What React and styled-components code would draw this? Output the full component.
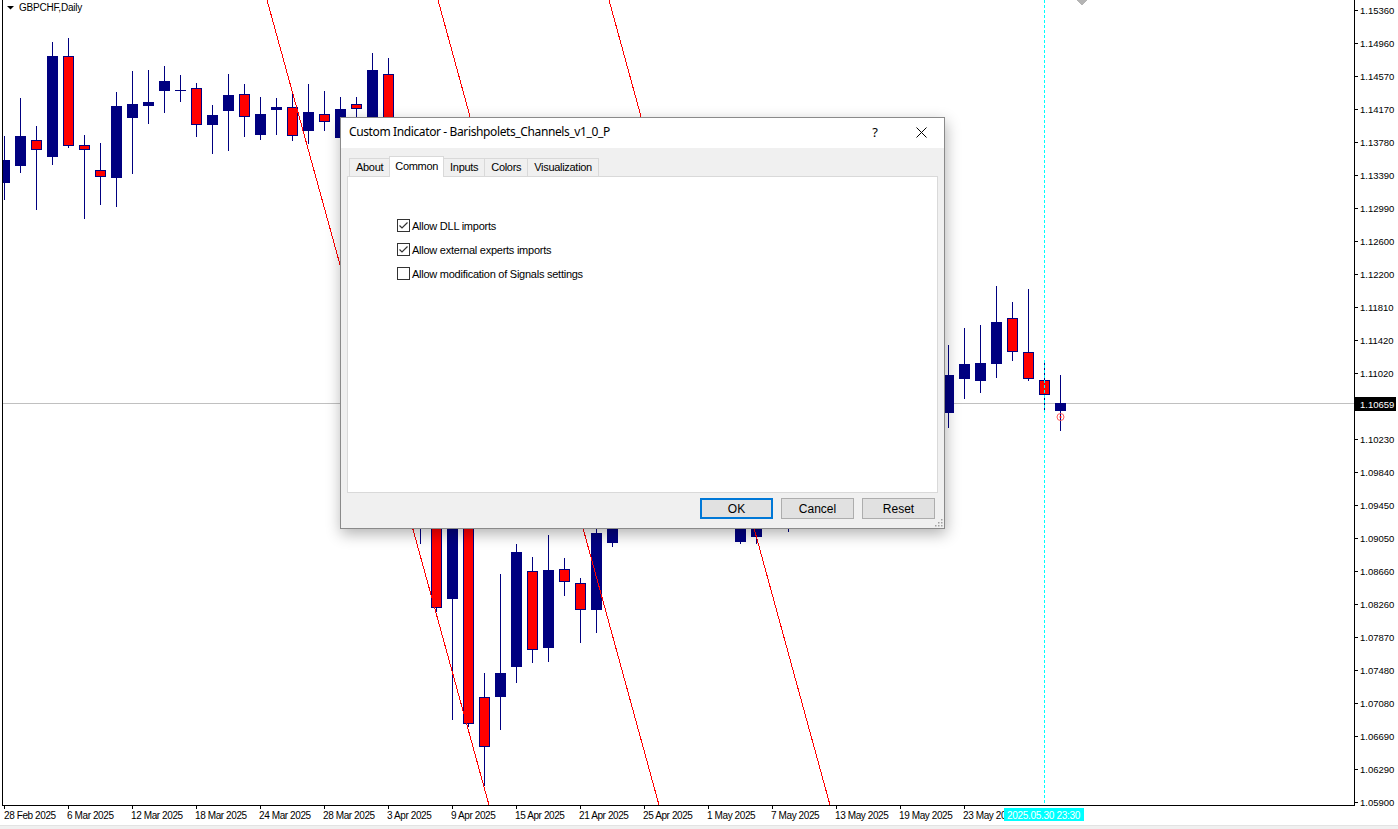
import React from 'react'
import styled, { createGlobalStyle } from 'styled-components'

const NAVY = '#000080'
const RED = '#ff0000'

const GlobalStyle = createGlobalStyle`
  body {
    margin: 0;
    background: #ffffff;
    overflow: hidden;
  }
`

const Terminal = styled.div`
  position: relative;
  width: 1398px;
  height: 829px;
  display: flex;
  flex-direction: column;
  background: #ffffff;
  font-family: "Liberation Sans", Arial, sans-serif;
`

const ChartSvg = styled.svg`
  display: block;
  flex: none;
  font-family: "Liberation Sans", Arial, sans-serif;
`

const StatusStrip = styled.div`
  flex: 1;
  background: #f0f0f0;
  border-top: 1px solid #e3e3e3;
`

const Dialog = styled.div`
  position: absolute;
  left: 340px;
  top: 117px;
  width: 605px;
  height: 412px;
  box-sizing: border-box;
  display: flex;
  flex-direction: column;
  background: #f0f0f0;
  border: 1px solid #8a8a8a;
  box-shadow: 1px 5px 14px rgba(0, 0, 0, 0.3);
  font-family: "Liberation Sans", Arial, sans-serif;
  font-size: 11px;
  letter-spacing: -0.25px;
  color: #000000;
`

const TitleBar = styled.div`
  flex: none;
  height: 30px;
  display: flex;
  align-items: center;
  background: #ffffff;
`

const Caption = styled.div`
  flex: 1;
  padding: 0 0 3px 8px;
  font-family: "Segoe UI", "Noto Sans", sans-serif;
  font-size: 12px;
  letter-spacing: -0.38px;
  white-space: nowrap;
`

const CaptionButton = styled.div`
  width: 46px;
  height: 30px;
  display: flex;
  align-items: center;
  justify-content: center;
  padding-bottom: 2px;
  box-sizing: border-box;
  font-family: "Noto Sans", sans-serif;
  font-size: 13px;
  letter-spacing: 0;
`

const DialogBody = styled.div`
  flex: 1;
  display: flex;
  flex-direction: column;
  padding: 8px 6px 0 6px;
`

const TabStrip = styled.div`
  position: relative;
  z-index: 1;
  height: 21px;
  margin-bottom: -1px;
  display: flex;
  align-items: flex-end;
  padding-left: 2px;
`

const Tab = styled.div`
  box-sizing: border-box;
  height: ${({ $active }) => ($active ? '21px' : '18px')};
  margin-bottom: ${({ $active }) => ($active ? '0' : '1px')};
  margin-left: -1px;
  padding: ${({ $active }) => ($active ? '0 5px 3px' : '0 6px 2px')};
  display: flex;
  align-items: center;
  background: ${({ $active }) => ($active ? '#ffffff' : '#f0f0f0')};
  border: 1px solid #d9d9d9;
  border-bottom: none;
  letter-spacing: -0.3px;
  white-space: nowrap;
  &:first-child {
    margin-left: 0;
  }
`

const TabPanel = styled.div`
  flex: none;
  height: 317px;
  box-sizing: border-box;
  display: flex;
  flex-direction: column;
  gap: 11px;
  padding: 42px 0 0 49px;
  background: #ffffff;
  border: 1px solid #d9d9d9;
`

const CheckRow = styled.label`
  height: 13px;
  display: flex;
  align-items: center;
  gap: 2px;
  white-space: nowrap;
`

const CheckBox = styled.span`
  width: 13px;
  height: 13px;
  box-sizing: border-box;
  display: flex;
  align-items: center;
  justify-content: center;
  background: #ffffff;
  border: 1px solid #333333;
`

const ButtonRow = styled.div`
  display: flex;
  justify-content: flex-end;
  gap: 8px;
  margin: 5px 3px 0 0;
`

const DialogButton = styled.div`
  width: 73px;
  height: 21px;
  box-sizing: border-box;
  display: flex;
  align-items: center;
  justify-content: center;
  background: #e1e1e1;
  border: ${({ $default }) => ($default ? '2px solid #0078d7' : '1px solid #adadad')};
  letter-spacing: 0;
  font-size: 12px;
`

const SizeGrip = styled.svg`
  position: absolute;
  right: 1px;
  bottom: 1px;
`

// chart geometry: one bar every 16px, price scale 33px per label step
const barX = (i) => 4 + 16 * i
const PLOT_RIGHT = 1354
const PLOT_BOTTOM = 805
const CURSOR_LABEL_X = 1004

// [index, high, open, close, low] in chart pixels (smaller = higher price)
const bars = [
  [0, 136, 183, 160, 200], [1, 98, 166, 136, 173], [2, 126, 140, 150, 210],
  [3, 42, 157, 56, 165], [4, 38, 56, 146, 148], [5, 135, 145, 150, 219],
  [6, 143, 170, 177, 205], [7, 92, 178, 106, 207], [8, 71, 118, 104, 174],
  [9, 70, 106, 102, 124], [10, 66, 91, 81, 113], [11, 75, 90, 90, 102],
  [12, 83, 88, 125, 137], [13, 105, 125, 115, 154], [14, 74, 111, 95, 151],
  [15, 84, 94, 117, 137], [16, 97, 135, 114, 140], [17, 98, 110, 107, 135],
  [18, 93, 107, 136, 141], [19, 84, 131, 112, 144], [20, 91, 114, 122, 131],
  [21, 97, 138, 109, 150], [22, 97, 104, 109, 160], [23, 53, 150, 70, 170],
  [24, 58, 74, 180, 200], [25, 190, 200, 260, 280], [26, 300, 330, 500, 544],
  [27, 480, 500, 608, 612], [28, 470, 599, 520, 720], [29, 505, 520, 724, 727],
  [30, 673, 697, 747, 786], [31, 574, 697, 673, 730], [32, 544, 667, 552, 683],
  [33, 557, 571, 650, 663], [34, 535, 648, 570, 662], [35, 558, 569, 582, 596],
  [36, 578, 583, 610, 643], [37, 515, 610, 533, 633], [38, 480, 543, 500, 547],
  [39, 470, 480, 505, 515], [40, 450, 500, 470, 515], [41, 440, 460, 490, 510],
  [42, 430, 495, 455, 512], [43, 420, 440, 470, 500], [44, 430, 480, 445, 505],
  [45, 440, 455, 500, 515], [46, 470, 542, 500, 544], [47, 480, 537, 495, 544],
  [48, 460, 500, 470, 520], [49, 440, 480, 460, 532], [50, 430, 450, 480, 500],
  [51, 400, 470, 430, 490], [52, 390, 410, 450, 470], [53, 380, 440, 400, 460],
  [54, 360, 410, 380, 430], [55, 350, 370, 400, 420], [56, 340, 400, 360, 415],
  [57, 350, 365, 395, 420], [58, 360, 410, 380, 425], [59, 345, 413, 375, 428],
  [60, 328, 379, 364, 399], [61, 325, 381, 363, 393], [62, 286, 364, 322, 378],
  [63, 302, 318, 352, 361], [64, 289, 352, 379, 381], [65, 360, 380, 395, 413],
  [66, 375, 411, 403, 431],
]

const channels = [
  [267, 0, 489, 805],
  [438, 0, 659, 805],
  [609, 0, 830, 805],
]

const priceLabels = [
  '1.15360', '1.14960', '1.14570', '1.14170', '1.13780', '1.13390', '1.12990',
  '1.12600', '1.12200', '1.11810', '1.11420', '1.11020', null, '1.10230',
  '1.09840', '1.09450', '1.09050', '1.08660', '1.08260', '1.07870', '1.07480',
  '1.07080', '1.06690', '1.06290', '1.05900',
]

const timeLabels = [
  '28 Feb 2025', '6 Mar 2025', '12 Mar 2025', '18 Mar 2025', '24 Mar 2025',
  '28 Mar 2025', '3 Apr 2025', '9 Apr 2025', '15 Apr 2025', '21 Apr 2025',
  '25 Apr 2025', '1 May 2025', '7 May 2025', '13 May 2025', '19 May 2025',
  '23 May 2025',
]

const Candle = ({ bar }) => {
  const [i, high, open, close, low] = bar
  const x = barX(i)
  const top = Math.min(open, close)
  const bottom = Math.max(open, close)
  const bull = close <= open
  return (
    <g>
      <line x1={x + 0.5} x2={x + 0.5} y1={high} y2={low} stroke={NAVY} />
      {bottom - top < 2 ? (
        <line x1={x - 5} x2={x + 6} y1={top + 0.5} y2={top + 0.5} stroke={NAVY} />
      ) : (
        <rect
          x={x - 4.5}
          y={top + 0.5}
          width={10}
          height={bottom - top - 1}
          fill={bull ? NAVY : RED}
          stroke={NAVY}
        />
      )}
    </g>
  )
}

const Chart = () => (
  <ChartSvg width="1398" height="825" viewBox="0 0 1398 825">
    <defs>
      <clipPath id="plot">
        <rect x="3" y="0" width={PLOT_RIGHT - 3} height={PLOT_BOTTOM} />
      </clipPath>
      <clipPath id="timescale">
        <rect x="0" y={PLOT_BOTTOM} width={CURSOR_LABEL_X} height="20" />
      </clipPath>
    </defs>

    <g clipPath="url(#plot)" shapeRendering="crispEdges">
      <line x1="3" x2={PLOT_RIGHT} y1="403.5" y2="403.5" stroke="#c0c0c0" />
      {bars.map((b) => (
        <Candle key={b[0]} bar={b} />
      ))}
      {channels.map(([x1, y1, x2, y2]) => (
        <line key={x1} x1={x1} y1={y1} x2={x2} y2={y2} stroke={RED} />
      ))}
      <line x1="1044.5" x2="1044.5" y1="0" y2={PLOT_BOTTOM} stroke="#00ffff" strokeDasharray="3 2" />
      <polygon points="1076,0 1088,0 1082,5" fill="#b4b4b4" />
    </g>

    <circle cx="1060.5" cy="417" r="3.5" fill="none" stroke="#ff5a5a" />
    <circle cx="1060.5" cy="417" r="1" fill={RED} />

    <polygon points="7,6 14,6 10.5,9.5" fill="#000" />
    <text x="19" y="11" fontSize="10" letterSpacing="-0.2" fill="#000">GBPCHF,Daily</text>

    <g shapeRendering="crispEdges">
      <line x1="2.5" x2="2.5" y1="0" y2={PLOT_BOTTOM + 1} stroke="#000" />
      <line x1={PLOT_RIGHT + 0.5} x2={PLOT_RIGHT + 0.5} y1="0" y2={PLOT_BOTTOM + 1} stroke="#000" />
      <line x1="2" x2={PLOT_RIGHT + 1} y1={PLOT_BOTTOM + 0.5} y2={PLOT_BOTTOM + 0.5} stroke="#000" />
      {priceLabels.map((p, k) => (
        <line key={k} x1={PLOT_RIGHT} x2={PLOT_RIGHT + 4} y1={10 + 33 * k + 0.5} y2={10 + 33 * k + 0.5} stroke="#000" />
      ))}
      {timeLabels.map((t, k) => (
        <line key={t} x1={barX(4 * k) + 0.5} x2={barX(4 * k) + 0.5} y1={PLOT_BOTTOM} y2={PLOT_BOTTOM + 4} stroke="#000" />
      ))}
    </g>

    {priceLabels.map((p, k) =>
      p ? (
        <text key={k} x="1360" y={10 + 33 * k + 4} fontSize="9.5" fill="#000">
          {p}
        </text>
      ) : null
    )}
    <rect x="1355" y="397" width="41" height="14" fill="#000" />
    <text x="1360" y="407.5" fontSize="9.5" fill="#fff">1.10659</text>

    <g clipPath="url(#timescale)">
      {timeLabels.map((t, k) => (
        <text key={t} x={Math.max(4, barX(4 * k) - 1)} y="819" fontSize="10" letterSpacing="-0.4" fill="#000">
          {t}
        </text>
      ))}
    </g>
    <rect x={CURSOR_LABEL_X} y="808" width="80" height="13" fill="#00ffff" />
    <text x={CURSOR_LABEL_X + 3} y="818.5" fontSize="10" letterSpacing="-0.3" fill="#fff">2025.05.30 23:30</text>
  </ChartSvg>
)

const CheckMark = () => (
  <svg width="11" height="11" viewBox="0 0 11 11">
    <path d="M1.5 5.5 L4 8 L9.5 2.5" fill="none" stroke="#333" strokeWidth="1.2" />
  </svg>
)

const Option = ({ checked, children }) => (
  <CheckRow>
    <CheckBox>{checked && <CheckMark />}</CheckBox>
    {children}
  </CheckRow>
)

const tabs = ['About', 'Common', 'Inputs', 'Colors', 'Visualization']

const IndicatorDialog = () => (
  <Dialog>
    <TitleBar>
      <Caption>Custom Indicator - Barishpolets_Channels_v1_0_P</Caption>
      <CaptionButton>?</CaptionButton>
      <CaptionButton>
        <svg width="11" height="11" viewBox="0 0 11 11">
          <path d="M0.5 0.5 L10.5 10.5 M10.5 0.5 L0.5 10.5" stroke="#000" strokeWidth="1" />
        </svg>
      </CaptionButton>
    </TitleBar>
    <DialogBody>
      <TabStrip>
        {tabs.map((t) => (
          <Tab key={t} $active={t === 'Common'}>
            {t}
          </Tab>
        ))}
      </TabStrip>
      <TabPanel>
        <Option checked>Allow DLL imports</Option>
        <Option checked>Allow external experts imports</Option>
        <Option>Allow modification of Signals settings</Option>
      </TabPanel>
      <ButtonRow>
        <DialogButton $default>OK</DialogButton>
        <DialogButton>Cancel</DialogButton>
        <DialogButton>Reset</DialogButton>
      </ButtonRow>
    </DialogBody>
    <SizeGrip width="10" height="10" viewBox="0 0 10 10">
      {[[8, 2], [8, 5], [5, 5], [8, 8], [5, 8], [2, 8]].map(([x, y]) => (
        <rect key={`${x}-${y}`} x={x} y={y} width="1.5" height="1.5" fill="#a0a0a0" />
      ))}
    </SizeGrip>
  </Dialog>
)

const App = () => (
  <>
    <GlobalStyle />
    <Terminal>
      <Chart />
      <StatusStrip />
      <IndicatorDialog />
    </Terminal>
  </>
)

export default App
